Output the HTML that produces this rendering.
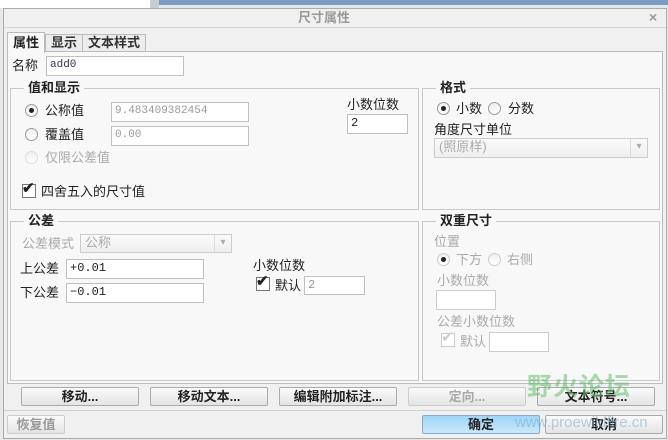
<!DOCTYPE html>
<html><head><meta charset="utf-8"><style>
*{margin:0;padding:0;box-sizing:border-box}
body{width:668px;height:440px;position:relative;overflow:hidden;background:#e8e8e8;font-family:"Liberation Sans","Noto Sans CJK SC",sans-serif;font-size:13px;color:#222}
.a{position:absolute}
.t{position:absolute;white-space:nowrap;line-height:14px}
.in{position:absolute;background:#fff;border:1px solid #bfbfbf;font-size:11px;padding-left:3px;line-height:16px;font-family:"Liberation Mono","Noto Sans CJK SC",monospace}
.grp{position:absolute;border:1px solid #c8c8c8}
.lg{position:absolute;background:#f8f8f8;font-weight:bold;padding:0 4px;line-height:14px}
.rad{position:absolute;width:13px;height:13px;border-radius:50%;border:1px solid #999;background:linear-gradient(#eee,#fff)}
.rad.on::after{content:"";position:absolute;left:3px;top:3px;width:5px;height:5px;border-radius:50%;background:#222}
.dis{color:#aaa}
.cb{position:absolute;width:14px;height:14px;border:1px solid #777;background:#fff}
.btn{position:absolute;height:19px;border:1px solid #aaa;border-radius:2px;background:linear-gradient(#fafafa,#e4e4e4);text-align:center;font-weight:bold;line-height:17px;color:#222}
.dd{position:absolute;border:1px solid #ccc;background:linear-gradient(#fafafa,#efefef);color:#aaa;padding-left:4px;line-height:16px}
.dd::after{content:"▾";position:absolute;right:0;top:0;width:16px;height:100%;border-left:1px solid #ddd;text-align:center;color:#aaa;font-size:10px}
</style></head><body>
<div class="a" style="left:0;top:0;width:150px;height:8px;background:#fff"></div>
<div class="a" style="left:150px;top:0;width:9px;height:8px;background:#c8ccd2"></div>
<div class="a" style="left:159px;top:0;width:509px;height:5px;background:#7b9cc4"></div>
<div class="a" style="left:3px;top:8px;width:664px;height:431px;background:#f0f0f0;border:1px solid #aaa"></div>
<div class="t" style="left:298px;top:11px;color:#999;font-weight:bold">尺寸属性</div>
<div class="t" style="left:649px;top:10px;color:#999;font-weight:bold;font-size:14px">×</div>
<div class="a" style="left:4px;top:27px;width:662px;height:1px;background:#d4d4d4"></div>
<div class="a" style="left:7px;top:51px;width:656px;height:333px;background:#f8f8f8;border:1px solid #bbb"></div>
<div class="a" style="left:7px;top:32px;width:38px;height:21px;background:#f8f8f8;border:1px solid #bbb;border-bottom:none"></div>
<div class="t" style="left:13px;top:36px;font-weight:bold">属性</div>
<div class="a" style="left:45px;top:34px;width:38px;height:17px;border:1px solid #bbb;border-bottom:none;background:#ececec"></div>
<div class="t" style="left:51px;top:36px;font-weight:bold;color:#333">显示</div>
<div class="a" style="left:82px;top:34px;width:64px;height:17px;border:1px solid #bbb;border-bottom:none;background:#ececec"></div>
<div class="t" style="left:88px;top:36px;font-weight:bold;color:#333">文本样式</div>

<div class="t" style="left:12px;top:59px">名称</div>
<div class="in" style="left:46px;top:56px;width:138px;height:20px;color:#335">add0</div>

<div class="grp" style="left:10px;top:88px;width:409px;height:122px"></div>
<div class="lg" style="left:24px;top:81px">值和显示</div>
<div class="rad on" style="left:25px;top:104px"></div><div class="t" style="left:45px;top:104px">公称值</div>
<div class="in" style="left:111px;top:102px;width:138px;height:20px;color:#999">9.483409382454</div>
<div class="rad" style="left:25px;top:128px"></div><div class="t" style="left:45px;top:128px">覆盖值</div>
<div class="in" style="left:111px;top:126px;width:138px;height:20px;color:#999">0.00</div>
<div class="rad" style="left:25px;top:151px;border-color:#ddd"></div><div class="t dis" style="left:45px;top:151px">仅限公差值</div>
<div class="cb" style="left:22px;top:184px"></div><div class="t" style="left:22px;top:182px;font-size:15px;font-weight:bold">✔</div>
<div class="t" style="left:41px;top:185px">四舍五入的尺寸值</div>
<div class="t" style="left:347px;top:98px">小数位数</div>
<div class="in" style="left:347px;top:114px;width:61px;height:20px;font-size:12px">2</div>

<div class="grp" style="left:422px;top:88px;width:238px;height:122px"></div>
<div class="lg" style="left:436px;top:81px">格式</div>
<div class="rad on" style="left:437px;top:102px"></div><div class="t" style="left:456px;top:102px">小数</div>
<div class="rad" style="left:488px;top:102px"></div><div class="t" style="left:508px;top:102px">分数</div>
<div class="t" style="left:434px;top:123px">角度尺寸单位</div>
<div class="dd" style="left:434px;top:138px;width:214px;height:20px">(照原样)</div>

<div class="grp" style="left:10px;top:221px;width:409px;height:160px"></div>
<div class="lg" style="left:24px;top:214px">公差</div>
<div class="t dis" style="left:22px;top:237px">公差模式</div>
<div class="dd" style="left:80px;top:234px;width:152px;height:19px">公称</div>
<div class="t" style="left:20px;top:262px">上公差</div>
<div class="in" style="left:66px;top:259px;width:138px;height:20px;font-size:12px">+0.01</div>
<div class="t" style="left:20px;top:286px">下公差</div>
<div class="in" style="left:66px;top:283px;width:138px;height:20px;font-size:12px">−0.01</div>
<div class="t" style="left:253px;top:259px">小数位数</div>
<div class="cb" style="left:256px;top:277px"></div><div class="t" style="left:256px;top:275px;font-size:15px;font-weight:bold">✔</div>
<div class="t" style="left:275px;top:279px">默认</div>
<div class="in" style="left:304px;top:276px;width:61px;height:19px;color:#999;font-size:12px">2</div>

<div class="grp" style="left:422px;top:221px;width:238px;height:160px"></div>
<div class="lg" style="left:436px;top:214px">双重尺寸</div>
<div class="t dis" style="left:434px;top:235px">位置</div>
<div class="rad on" style="left:437px;top:253px;border-color:#ccc"></div><div class="t dis" style="left:456px;top:253px">下方</div>
<div class="rad" style="left:488px;top:253px;border-color:#ccc"></div><div class="t dis" style="left:507px;top:253px">右侧</div>
<div class="t dis" style="left:437px;top:274px">小数位数</div>
<div class="in" style="left:436px;top:290px;width:60px;height:20px;border-color:#ccc"></div>
<div class="t dis" style="left:437px;top:315px">公差小数位数</div>
<div class="cb" style="left:441px;top:333px;border-color:#ccc"></div><div class="t" style="left:441px;top:331px;font-size:15px;color:#ccc">✔</div>
<div class="t dis" style="left:460px;top:335px">默认</div>
<div class="in" style="left:489px;top:332px;width:60px;height:20px;border-color:#ccc"></div>

<div class="btn" style="left:21px;top:387px;width:118px">移动...</div>
<div class="btn" style="left:150px;top:387px;width:118px">移动文本...</div>
<div class="btn" style="left:279px;top:387px;width:118px">编辑附加标注...</div>
<div class="btn" style="left:408px;top:387px;width:118px;color:#aaa;border-color:#ccc">定向...</div>
<div class="btn" style="left:537px;top:387px;width:118px">文本符号...</div>
<div class="a" style="left:4px;top:410px;width:662px;height:1px;background:#d0d0d0"></div>
<div class="btn" style="left:7px;top:415px;width:58px;color:#999;border-color:#ccc">恢复值</div>
<div class="btn" style="left:422px;top:415px;width:118px;background:linear-gradient(#9fd4f6,#cbe9fb);border-color:#8ac">确定</div>
<div class="btn" style="left:545px;top:415px;width:118px">取消</div>

<div class="t" style="left:527px;top:373px;font-size:25px;line-height:28px;color:rgba(100,190,110,.55);font-weight:bold;letter-spacing:1px">野火论坛</div>
<div class="t" style="left:515px;top:414px;font-size:15px;line-height:18px;color:rgba(120,170,210,.55)">www.proewildfire.cn</div>
</body></html>
